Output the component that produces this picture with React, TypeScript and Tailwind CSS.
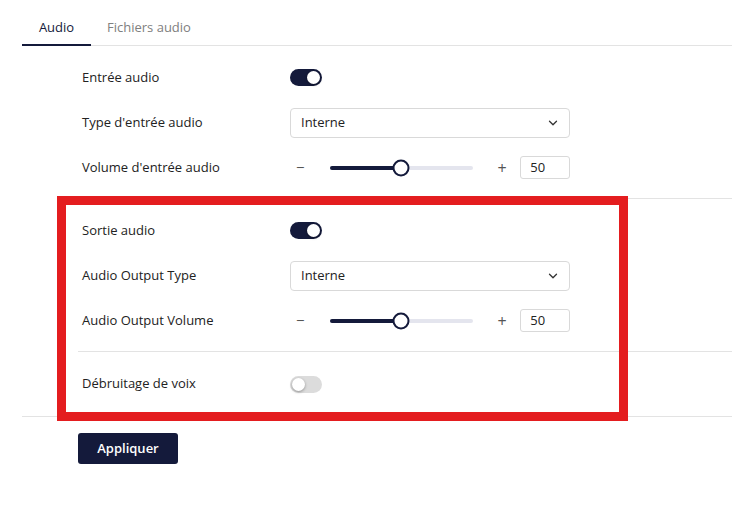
import { ChevronDown } from "lucide-react";

const navy = "bg-[#141a3b]";

const Toggle = ({ on }: { on: boolean }) => (
  <div
    className={`flex h-[17px] w-[32px] items-center rounded-full px-[2px] ${
      on ? `${navy} justify-end` : "bg-[#dcdcdc] justify-start"
    }`}
  >
    <div className="h-[13px] w-[13px] rounded-full bg-white shadow-[0_1px_3px_rgba(0,0,0,0.35)]" />
  </div>
);

const Select = ({ value }: { value: string }) => (
  <div className="flex h-[30px] w-[280px] items-center justify-between rounded-[4px] border border-[#d9d9d9] bg-white pl-[10px] pr-[9px] text-[13px] text-[#222]">
    <span>{value}</span>
    <ChevronDown size={14} strokeWidth={2.2} className="text-[#333]" />
  </div>
);

const Slider = ({ value }: { value: number }) => (
  <div className="flex w-[280px] items-center">
    <span className="w-[24px] pl-[6px] text-[15px] leading-none text-[#555]">−</span>
    <div className="relative ml-[16px] h-[4px] w-[144px] rounded-full bg-[#e4e5ee]">
      <div className={`h-full rounded-full ${navy}`} style={{ width: `${value}%` }} />
      <div
        className="absolute top-1/2 h-[17px] w-[17px] -translate-x-1/2 -translate-y-1/2 rounded-full border-2 border-[#141a3b] bg-white"
        style={{ left: `${value}%` }}
      />
    </div>
    <span className="ml-[25px] w-[18px] text-[16px] leading-none text-[#555]">+</span>
    <div className="ml-[5px] flex h-[23px] w-[50px] items-center rounded-[3px] border border-[#d9d9d9] pl-[9px] text-[13px] text-[#222]">
      {value}
    </div>
  </div>
);

const Row = ({ label, children, h = "h-[45px]" }: { label: string; children: React.ReactNode; h?: string }) => (
  <div className={`flex items-center ${h}`}>
    <div className="w-[212px] pl-[4px] text-[13px] text-[#222]">{label}</div>
    {children}
  </div>
);

export default function App() {
  return (
    <div
      className="relative h-[515px] w-[732px] overflow-hidden bg-white pl-[22px]"
      style={{ fontFamily: '"Open Sans", "Noto Sans", sans-serif' }}
    >
      {/* tabs */}
      <div className="flex h-[46px] items-end border-b border-[#e3e3e3]">
        <div className="-mb-px flex h-[46px] w-[69px] items-center justify-center border-b-2 border-[#141a3b] pt-[11px] text-[13px] text-[#141a3b]">
          Audio
        </div>
        <div className="flex h-[46px] items-center pl-[16px] pt-[11px] text-[13px] text-[#808080]">Fichiers audio</div>
      </div>

      <div className="ml-[56px]">
        <div className="border-b border-[#e3e3e3] pb-[8px] pt-[9px]">
          <Row label="Entrée audio">
            <Toggle on />
          </Row>
          <Row label="Type d'entrée audio">
            <Select value="Interne" />
          </Row>
          <Row label="Volume d'entrée audio">
            <Slider value={50} />
          </Row>
        </div>

        <div className="border-b border-[#e3e3e3] pb-[8px] pt-[9px]">
          <Row label="Sortie audio">
            <Toggle on />
          </Row>
          <Row label="Audio Output Type">
            <Select value="Interne" />
          </Row>
          <Row label="Audio Output Volume">
            <Slider value={50} />
          </Row>
        </div>

        <div className="pb-[10px] pt-[10px]">
          <Row label="Débruitage de voix" h="h-[44px]">
            <Toggle on={false} />
          </Row>
        </div>
      </div>

      <div className="border-t border-[#e3e3e3] pl-[56px] pt-[16px]">
        <button className={`h-[31px] w-[100px] rounded-[3px] ${navy} text-[13px] font-semibold text-white`}>
          Appliquer
        </button>
      </div>

      {/* highlight annotation */}
      <div className="pointer-events-none absolute left-[57px] top-[196px] h-[225px] w-[571px] border-[9px] border-[#e41d1f]" />
    </div>
  );
}
